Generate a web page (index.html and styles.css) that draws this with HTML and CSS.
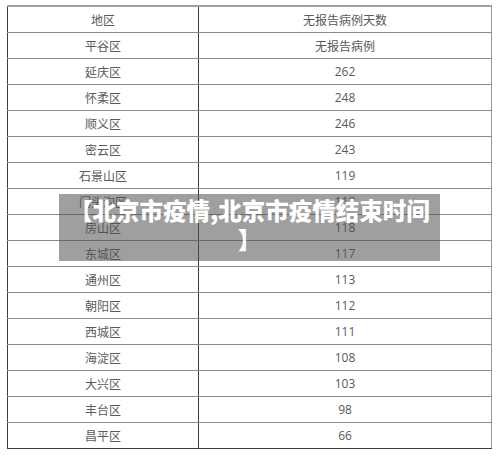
FILE: index.html
```html
<!DOCTYPE html>
<html lang="zh-CN">
<head>
<meta charset="utf-8">
<title>北京市疫情</title>
<link rel="stylesheet" href="styles.css">
</head>
<body>
<div class="page">
  <table class="data">
    <colgroup><col class="c1"><col class="c2"></colgroup>
    <tbody>
      <tr><td>地区</td><td>无报告病例天数</td></tr>
      <tr><td>平谷区</td><td>无报告病例</td></tr>
      <tr><td>延庆区</td><td class="num">262</td></tr>
      <tr><td>怀柔区</td><td class="num">248</td></tr>
      <tr><td>顺义区</td><td class="num">246</td></tr>
      <tr><td>密云区</td><td class="num">243</td></tr>
      <tr><td>石景山区</td><td class="num">119</td></tr>
      <tr><td>门头沟区</td><td class="num">118</td></tr>
      <tr><td>房山区</td><td class="num">118</td></tr>
      <tr><td>东城区</td><td class="num">117</td></tr>
      <tr><td>通州区</td><td class="num">113</td></tr>
      <tr><td>朝阳区</td><td class="num">112</td></tr>
      <tr><td>西城区</td><td class="num">111</td></tr>
      <tr><td>海淀区</td><td class="num">108</td></tr>
      <tr><td>大兴区</td><td class="num">103</td></tr>
      <tr><td>丰台区</td><td class="num">98</td></tr>
      <tr><td>昌平区</td><td class="num">66</td></tr>
    </tbody>
  </table>
  <div class="caption">【北京市疫情,北京市疫情结束时间】</div>
</div>
</body>
</html>
```
FILE: styles.css
```css
html, body {
  margin: 0;
  padding: 0;
  background: #fff;
}
.page {
  position: relative;
  width: 500px;
  height: 456px;
  padding: 5px 0 0 7px;
  box-sizing: border-box;
}
.data {
  border-collapse: collapse;
  table-layout: fixed;
  width: 485px;
  font-family: "Noto Sans CJK SC", "Noto Sans", sans-serif;
  font-size: 12px;
  color: #5a5a5a;
}
.c1 { width: 191px; }
.data td {
  height: 25px;
  padding: 0;
  text-align: center;
  vertical-align: middle;
  border-top: 1px solid #8a8a8a;
  border-bottom: 1px solid #8a8a8a;
  border-left: 1px solid #3c3c3c;
  border-right: 1px solid #3c3c3c;
  line-height: 1;
}
.data tr:first-child td { border-top: 2px solid #a0a0a0; }
.data tr:last-child td { border-bottom: 1px solid #3c3c3c; }
.data td:last-child { border-right: 1px solid #9a9a9a; }
.data td.num {
  font-family: "Open Sans", "Noto Sans", sans-serif;
  font-size: 12px;
}
.caption {
  position: absolute;
  left: 59px;
  top: 194px;
  width: 381px;
  height: 67px;
  box-sizing: border-box;
  padding: 2px 10px 0;
  background: rgba(80, 80, 80, 0.55);
  color: #fff;
  font-family: "Noto Sans CJK SC", sans-serif;
  font-weight: 900;
  font-size: 23.5px;
  line-height: 29px;
  text-align: center;
  line-break: anywhere;
}
```
